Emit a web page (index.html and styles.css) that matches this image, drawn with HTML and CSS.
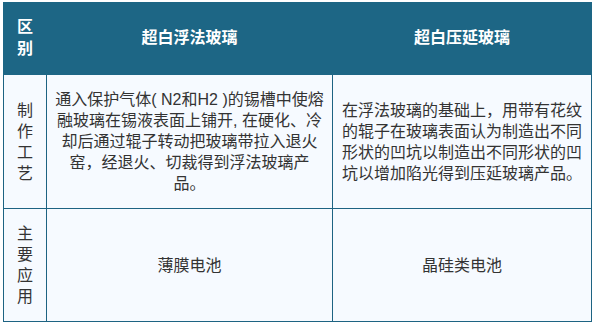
FILE: index.html
```html
<!DOCTYPE html>
<html lang="zh-CN">
<head>
<meta charset="utf-8">
<title>超白浮法玻璃与超白压延玻璃</title>
<link rel="stylesheet" href="styles.css">
</head>
<body>
<table class="cmp">
  <colgroup>
    <col class="c-label">
    <col class="c-float">
    <col class="c-roll">
  </colgroup>
  <thead>
    <tr>
      <th class="label">区<br>别</th>
      <th>超白浮法玻璃</th>
      <th>超白压延玻璃</th>
    </tr>
  </thead>
  <tbody>
    <tr>
      <td class="label">制<br>作<br>工<br>艺</td>
      <td class="center">通入保护气体( N2和H2 )的锡槽中使熔<br>融玻璃在锡液表面上铺开, 在硬化、冷<br>却后通过辊子转动把玻璃带拉入退火<br>窑，经退火、切裁得到浮法玻璃产<br>品。</td>
      <td class="left">在浮法玻璃的基础上，用带有花纹<br>的辊子在玻璃表面认为制造出不同<br>形状的凹坑以制造出不同形状的凹<br>坑以增加陷光得到压延玻璃产品。</td>
    </tr>
    <tr>
      <td class="label">主<br>要<br>应<br>用</td>
      <td class="center">薄膜电池</td>
      <td class="center">晶硅类电池</td>
    </tr>
  </tbody>
</table>
</body>
</html>
```

FILE: styles.css
```css
html, body {
  margin: 0;
  padding: 0;
  background: #ffffff;
}

body {
  font-family: "Liberation Sans", "Noto Sans CJK SC", sans-serif;
  font-size: 16px;
  color: #333333;
}

.cmp {
  border-collapse: collapse;
  table-layout: fixed;
  width: 588px;
  margin: 2px 0 0 3px;
}

.c-label { width: 43px; }
.c-float { width: 286px; }
.c-roll { width: 259px; }

.cmp th {
  background: #1d6685;
  color: #ffffff;
  font-weight: bold;
  line-height: 22px;
  padding: 13px 4px 14px;
  border: 1px solid #1d6685;
  text-align: center;
  vertical-align: middle;
}

.cmp td {
  background: #f6faff;
  border: 1px solid #1d6382;
  line-height: 21px;
  padding: 14px 6px;
  vertical-align: middle;
  white-space: nowrap;
}

.cmp td.label {
  text-align: center;
  padding-left: 2px;
  padding-right: 2px;
}

.cmp td.center {
  text-align: center;
}

.cmp td.left {
  text-align: left;
  padding-left: 9px;
}
```
